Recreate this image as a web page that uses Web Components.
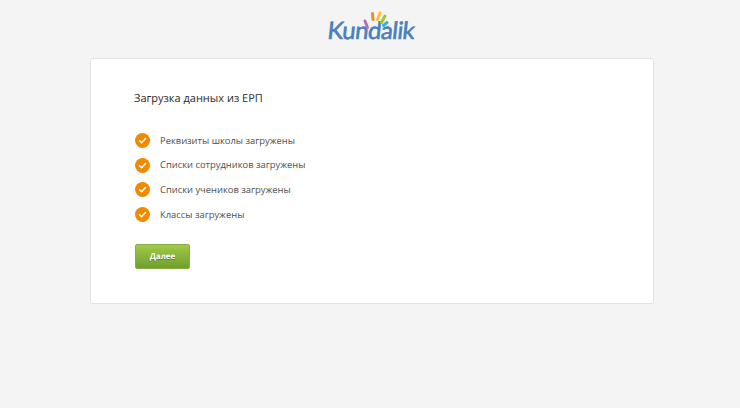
<!DOCTYPE html>
<html lang="ru"><head><meta charset="utf-8"><title>Kundalik</title>
<style>
html,body{margin:0;padding:0;height:100%}
body{background:#f4f4f4;font-family:"Open Sans",sans-serif;text-rendering:geometricPrecision}
</style></head><body>
<erp-page>
  <erp-logo slot="logo"></erp-logo>
  <erp-card>
    <h1 slot="title">Загрузка данных из ЕРП</h1>
    <erp-item>Реквизиты школы загружены</erp-item>
    <erp-item>Списки сотрудников загружены</erp-item>
    <erp-item>Списки учеников загружены</erp-item>
    <erp-item>Классы загружены</erp-item>
    <erp-button slot="action">Далее</erp-button>
  </erp-card>
</erp-page>
<script>
function def(name,html){
  customElements.define(name,class extends HTMLElement{
    constructor(){super();this.attachShadow({mode:'open'}).innerHTML=html;}
  });
}
def('erp-page',`<style>
:host{display:flex;flex-direction:column;align-items:center;box-sizing:border-box;width:740px;height:408px;padding-left:4px;overflow:hidden}
.top{height:58px;display:flex;justify-content:center;width:100%}
</style><div class="top"><slot name="logo"></slot></div><slot></slot>`);
def('erp-logo',`<style>
:host{display:block;width:90px;height:46px;margin-top:9px;position:relative;left:-1px}
.t{position:absolute;left:-.500px;top:6px;font:400 24px/32px "Lato",sans-serif;color:#4a7fb8;letter-spacing:-.55px;-webkit-text-stroke:.6px #4a7fb8;white-space:nowrap;transform:skewX(-6deg);transform-origin:0 100%}
svg{position:absolute;left:0;top:0}
</style><span class="t">Kundalik</span>
<svg width="90" height="46" viewBox="0 0 90 46" fill="none" stroke-linecap="round" stroke-width="3">
<path d="M39 12 L41.500 18.500" stroke="#b072b4"/>
<path d="M46.500 4.500 L47 10.500" stroke="#f08a24"/>
<path d="M54 4 L51.500 10.500" stroke="#f7c22e"/>
<path d="M59 7 L55.500 13.500" stroke="#a3c33c"/>
<path d="M61 13.500 L57.500 16.500" stroke="#35b4d8"/>
</svg>`);
def('erp-card',`<style>
:host{display:block;box-sizing:border-box;width:564px;height:246px;background:#fff;border:1px solid #e2e2e2;border-radius:3px;padding:31.500px 43px 0}
::slotted(h1){margin:0 0 25px;font:500 11px/16px "Open Sans",sans-serif;color:#2b2b2b}
.list{display:flex;flex-direction:column;gap:6.700px}
.act{margin-top:20.200px}
</style><slot name="title"></slot><div class="list"><slot></slot></div><div class="act"><slot name="action"></slot></div>`);
def('erp-item',`<style>
:host{display:flex;align-items:center;height:18px;font:400 9.400px/18px "Open Sans",sans-serif;color:#505050}
svg{width:15px;height:15px;margin:0 10px 0 1px;flex:none}
</style><svg viewBox="0 0 15 15"><circle cx="7.500" cy="7.500" r="7.500" fill="#f08a00"/><path d="M4.500 7.700 L6.600 9.800 L10.500 5.600" fill="none" stroke="#fff" stroke-width="1.500" stroke-linecap="round" stroke-linejoin="round"/></svg><span><slot></slot></span>`);
def('erp-button',`<style>
:host{display:flex;align-items:center;justify-content:center;box-sizing:border-box;width:55px;height:25px;margin-left:1px;padding-top:1px;background:linear-gradient(#a2c94a,#6f9f2c);border:1px solid #86ad42;border-radius:2px;font:700 8px/1 "Open Sans",sans-serif;color:#fff;text-shadow:0 1px 1px rgba(0,0,0,.3)}
</style><slot></slot>`);
</script></body></html>
